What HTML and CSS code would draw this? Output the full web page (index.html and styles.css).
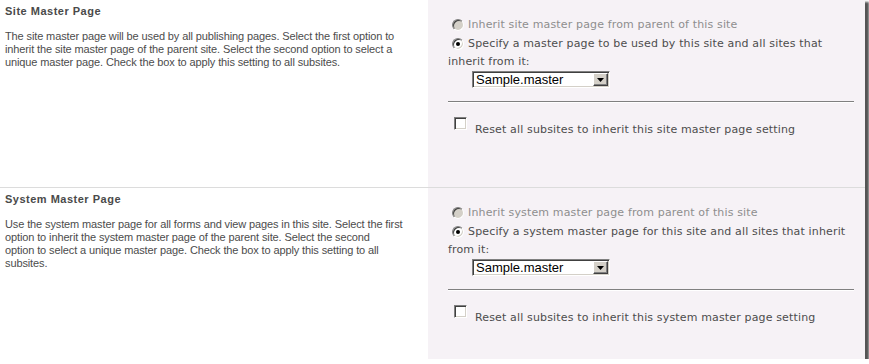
FILE: index.html
```html
<!DOCTYPE html>
<html>
<head>
<meta charset="utf-8">
<title>Master Page Settings</title>
<link rel="stylesheet" href="styles.css">
</head>
<body>
<div class="frame">
  <section class="row first">
    <div class="desc">
      <h3 class="title">Site Master Page</h3>
      <p class="text">The site master page will be used by all publishing pages. Select the first option to<br>inherit the site master page of the parent site. Select the second option to select a<br>unique master page. Check the box to apply this setting to all subsites.</p>
    </div>
    <div class="controls">
      <div class="opt disabled"><span class="radio"></span><span>Inherit site master page from parent of this site</span></div>
      <div class="opt"><span class="radio on"></span><span>Specify a master page to be used by this site and all sites that</span></div>
      <div class="cont">inherit from it:</div>
      <div class="select"><span class="value">Sample.master</span><span class="btn"><svg width="7" height="4" viewBox="0 0 7 4"><polygon points="0,0 7,0 3.5,4" fill="#000"/></svg></span></div>
      <div class="rule"></div>
      <div class="check"><span class="box"></span><span class="clabel">Reset all subsites to inherit this site master page setting</span></div>
    </div>
  </section>
  <section class="row second">
    <div class="desc">
      <h3 class="title">System Master Page</h3>
      <p class="text">Use the system master page for all forms and view pages in this site. Select the first<br>option to inherit the system master page of the parent site. Select the second<br>option to select a unique master page. Check the box to apply this setting to all<br>subsites.</p>
    </div>
    <div class="controls">
      <div class="opt disabled"><span class="radio"></span><span>Inherit system master page from parent of this site</span></div>
      <div class="opt"><span class="radio on"></span><span>Specify a system master page for this site and all sites that inherit</span></div>
      <div class="cont">from it:</div>
      <div class="select"><span class="value">Sample.master</span><span class="btn"><svg width="7" height="4" viewBox="0 0 7 4"><polygon points="0,0 7,0 3.5,4" fill="#000"/></svg></span></div>
      <div class="rule"></div>
      <div class="check"><span class="box"></span><span class="clabel">Reset all subsites to inherit this system master page setting</span></div>
    </div>
  </section>
</div>
</body>
</html>
```
FILE: styles.css
```css
* { box-sizing: border-box; }
html, body { margin: 0; padding: 0; background: #fff; }

.frame {
  width: 865px;
  height: 359px;
  background: #fff;
  box-shadow: 3px 3px 2px 1px #555;
  overflow: hidden;
  display: flex;
  flex-direction: column;
}

.row {
  display: grid;
  grid-template-columns: 428px 1fr;
}
.row.first { height: 188px; border-bottom: 1px solid #dcdcdc; }
.row.second { flex: 1; }

.desc {
  padding: 5px 0 0 5px;
  font-family: "Liberation Sans", Arial, sans-serif;
  font-size: 11px;
  color: #4c4c4c;
}
.title {
  margin: 0;
  font-size: 11px;
  line-height: 13px;
  font-weight: bold;
  letter-spacing: 0.5px;
  color: #4a4a4a;
}
.text {
  margin: 12px 0 0;
  line-height: 13px;
  letter-spacing: -0.12px;
  white-space: nowrap;
}

.controls {
  background: #f6f2f6;
  padding: 15px 0 0 20px;
  font-family: "DejaVu Sans", Verdana, sans-serif;
  font-size: 11px;
  letter-spacing: 0.15px;
  color: #4d4d4d;
}
.opt {
  height: 19px;
  display: flex;
  align-items: center;
  white-space: nowrap;
}
.opt.disabled { color: #8e8e8e; }

.radio {
  width: 12px;
  height: 12px;
  margin: 0 4px;
  border-radius: 50%;
  border: 1px solid;
  border-color: #808080 #fff #fff #808080;
  background: #fff;
  box-shadow: inset 1px 1px #404040, inset -1px -1px #d4d0c8;
  display: flex;
  align-items: center;
  justify-content: center;
  flex: none;
}
.opt.disabled .radio { background: #d4d0c8; }
.radio.on::after {
  content: "";
  width: 4px;
  height: 4px;
  border-radius: 50%;
  background: #000;
}

.cont { line-height: 18px; }

.select {
  margin-left: 24px;
  width: 138px;
  height: 17px;
  display: flex;
  align-items: center;
  border: 1px solid;
  border-color: #808080 #fff #fff #808080;
  box-shadow: inset 1px 1px #404040, inset -1px -1px #d4d0c8;
  background: #fff;
  padding: 1px;
}
.value {
  flex: 1;
  padding-left: 2px;
  font-family: "Liberation Sans", Arial, sans-serif;
  font-size: 13px;
  line-height: 13px;
  letter-spacing: 0;
  color: #000;
}
.btn {
  width: 15px;
  height: 13px;
  background: #d4d0c8;
  border: 1px solid;
  border-color: #fff #404040 #404040 #fff;
  box-shadow: inset -1px -1px #808080;
  display: flex;
  align-items: center;
  justify-content: center;
}
.btn svg { display: block; margin: 0 0 0 -1px; }

.rule {
  margin: 13px 11px 0 0;
  height: 2px;
  border-top: 1px solid #808080;
  border-bottom: 1px solid #fff;
}

.check {
  display: flex;
  align-items: flex-start;
  margin-top: 14px;
}
.box {
  width: 13px;
  height: 13px;
  margin-left: 6px;
  border: 1px solid;
  border-color: #808080 #fff #fff #808080;
  box-shadow: inset 1px 1px #404040, inset -1px -1px #d4d0c8;
  background: #fff;
  flex: none;
}
.clabel {
  margin: 6px 0 0 8px;
  line-height: 14px;
  white-space: nowrap;
}
```
